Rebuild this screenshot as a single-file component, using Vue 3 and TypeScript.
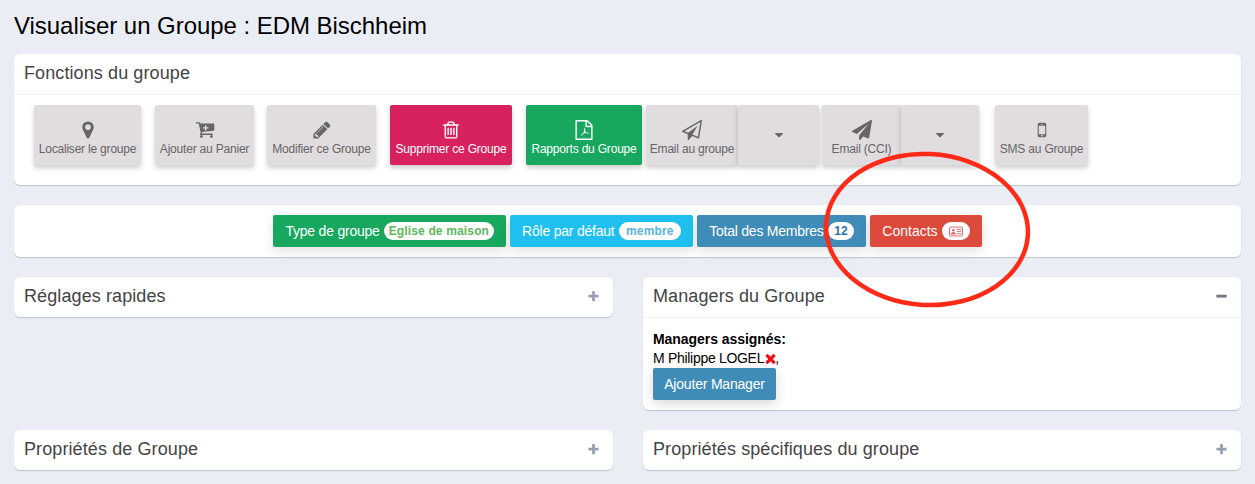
<template>
  <div class="page">
    <h1 class="title">Visualiser un Groupe : EDM Bischheim</h1>

    <section class="card functions">
      <header class="card-head">Fonctions du groupe</header>
      <div class="actions">
        <div
          v-for="group in actionGroups"
          :key="group.label"
          class="action-group"
          :style="{ marginRight: group.gap + 'px' }"
        >
          <button class="action" :class="group.tone" :style="{ width: group.width + 'px' }">
            <svg class="action-icon" viewBox="0 0 1792 1792">
              <path :d="group.icon" fill="currentColor" />
            </svg>
            <span>{{ group.label }}</span>
          </button>
          <button v-if="group.dropWidth" class="action caret-button" :style="{ width: group.dropWidth + 'px' }">
            <svg class="caret" viewBox="0 0 1792 1792"><path :d="icons.caret" fill="currentColor" /></svg>
          </button>
        </div>
      </div>
    </section>

    <section class="card stats">
      <button v-for="s in stats" :key="s.label" class="stat" :class="s.tone">
        {{ s.label }}
        <span class="pill" :class="s.pillClass">
          <template v-if="s.value">{{ s.value }}</template>
          <svg v-else class="contact-icon" viewBox="0 0 20 14">
            <rect x="0.7" y="0.7" width="18.6" height="12.6" rx="1.5" fill="none" stroke="currentColor" stroke-width="1.4" />
            <circle cx="6.2" cy="5.2" r="1.9" fill="currentColor" />
            <path d="M2.8 11.2c0-2.4 1.4-3.4 3.4-3.4s3.4 1 3.4 3.4z" fill="currentColor" />
            <path d="M11.4 4h6M11.4 7h6M11.4 10h6" stroke="currentColor" stroke-width="1.3" />
          </svg>
        </span>
      </button>
    </section>

    <div class="columns">
      <section class="card panel">
        <header class="card-head flat">
          Réglages rapides
          <svg class="toggle" viewBox="0 0 1792 1792"><path :d="icons.plus" fill="currentColor" /></svg>
        </header>
      </section>

      <section class="card panel">
        <header class="card-head">
          Managers du Groupe
          <svg class="toggle dark" viewBox="0 0 1792 1792"><path :d="icons.minus" fill="currentColor" /></svg>
        </header>
        <div class="managers">
          <strong>Managers assignés:</strong>
          <div class="manager-line">M Philippe LOGEL<svg class="remove" viewBox="0 0 1792 1792"><path :d="icons.times" fill="currentColor" /></svg>,</div>
          <button class="add-manager">Ajouter Manager</button>
        </div>
      </section>

      <section class="card panel">
        <header class="card-head flat">
          Propriétés de Groupe
          <svg class="toggle" viewBox="0 0 1792 1792"><path :d="icons.plus" fill="currentColor" /></svg>
        </header>
      </section>

      <section class="card panel">
        <header class="card-head flat">
          Propriétés spécifiques du groupe
          <svg class="toggle" viewBox="0 0 1792 1792"><path :d="icons.plus" fill="currentColor" /></svg>
        </header>
      </section>
    </div>

    <!-- hand-drawn annotation sitting on top of the screenshot -->
    <svg class="scribble" viewBox="0 0 1255 484">
      <ellipse cx="927" cy="229.5" rx="101" ry="75.5" transform="rotate(3 927 229.5)" fill="none" stroke="#ff2a17" stroke-width="4.5" />
    </svg>
  </div>
</template>

<script setup lang="ts">
const icons = {
  marker:
    'M1152 640q0-106-75-181t-181-75-181 75-75 181 75 181 181 75 181-75 75-181zm256 0q0 109-33 179l-364 774q-16 33-47.5 52t-67.5 19-67.5-19-46.5-52l-365-774q-33-70-33-179 0-212 150-362t362-150 362 150 150 362z',
  cart:
    'M1216 704q0-26-19-45t-45-19h-128v-128q0-26-19-45t-45-19-45 19-19 45v128h-128q-26 0-45 19t-19 45 19 45 45 19h128v128q0 26 19 45t45 19 45-19 19-45v-128h128q26 0 45-19t19-45zm-512 768q0 53-37.5 90.5t-90.5 37.5-90.5-37.5-37.5-90.5 37.5-90.5 90.5-37.5 90.5 37.5 37.5 90.5zm896 0q0 53-37.5 90.5t-90.5 37.5-90.5-37.5-37.5-90.5 37.5-90.5 90.5-37.5 90.5 37.5 37.5 90.5zm128-1088v512q0 24-16 42.5t-41 21.5l-1044 122q1 7 4.5 21.5t6 26.5 2.5 22q0 16-24 64h920q26 0 45 19t19 45-19 45-45 19h-1024q-26 0-45-19t-19-45q0-14 11-39.5t29.5-59.5 20.5-38l-177-823h-204q-26 0-45-19t-19-45 19-45 45-19h256q16 0 28.5 6.5t20 15.5 13 24.5 7.5 26.5 5.5 29.5 4.5 25.5h1201q26 0 45 19t19 45z',
  pencil:
    'M491 1536l91-91-235-235-91 91v107h128v128h107zm523-928q0-22-22-22-10 0-17 7l-542 542q-7 7-7 17 0 22 22 22 10 0 17-7l542-542q7-7 7-17zm-54-192l416 416-832 832h-416v-416zm683 96q0 53-37 90l-166 166-416-416 166-165q36-38 90-38 53 0 91 38l235 234q37 39 37 91z',
  trash:
    'M704 736v576q0 14-9 23t-23 9h-64q-14 0-23-9t-9-23v-576q0-14 9-23t23-9h64q14 0 23 9t9 23zm256 0v576q0 14-9 23t-23 9h-64q-14 0-23-9t-9-23v-576q0-14 9-23t23-9h64q14 0 23 9t9 23zm256 0v576q0 14-9 23t-23 9h-64q-14 0-23-9t-9-23v-576q0-14 9-23t23-9h64q14 0 23 9t9 23zm128 724v-948h-896v948q0 22 7 40.5t14.5 27 10.5 8.5h832q3 0 10.5-8.5t14.5-27 7-40.5zm-672-1076h448l-48-117q-7-9-17-11h-317q-10 2-17 11zm928 32v64q0 14-9 23t-23 9h-96v948q0 83-47 143.5t-113 60.5h-832q-66 0-113-58.5t-47-141.5v-952h-96q-14 0-23-9t-9-23v-64q0-14 9-23t23-9h309l70-167q15-37 54-63t79-26h320q40 0 79 26t54 63l70 167h309q14 0 23 9t9 23z',
  // page outline with folded corner and a rough pdf squiggle
  pdf:
    'M1596 380q28 28 48 76t20 88v1152q0 40-28 68t-68 28h-1344q-40 0-68-28t-28-68v-1600q0-40 28-68t68-28h896q40 0 88 20t76 48zm-444-244v376h376q-10-29-22-41l-313-313q-12-12-41-22zm384 1528v-1024h-416q-40 0-68-28t-28-68v-416h-768v1536h1280zm-514-593q25 20 64 44 45-5 89-5 111 0 134 37 12 17 1 40 0 1-1 2l-2 2v1q-4 25-47 25-32 0-77-13t-87-35q-146 16-259 55-101 173-160 173-10 0-19-5l-16-8-4-3q-7-7-4-25 6-28 39-64t92-67q10-6 16 4 1 1 2 3 36-59 74-136 47-94 72-181-17-58-21.5-112.5t4.5-89.5q8-28 30-28h16q17 0 26 11 13 15 6 49-1 4-3 5 1 3 1 8v15q-1 62-7 97 28 84 74 122z',
  plane:
    'M1764 11q33 24 27 64l-256 1536q-5 29-32 45-14 8-31 8-11 0-24-5l-453-185-242 295q-18 23-49 23-13 0-22-4-19-7-30.5-23.5t-11.5-36.5v-349l864-1059-1069 925-395-162q-37-14-40-55-2-40 32-59l1664-960q15-9 32-9 20 0 36 11z',
  planeOutline:
    'M1764 11q33 24 27 64l-256 1536q-5 29-32 45-14 8-31 8-11 0-24-5l-527-215-298 327q-18 21-47 21-14 0-23-4-19-7-30-23.5t-11-36.5v-452l-472-193q-37-14-40-55-3-39 32-59l1664-960q35-21 68 2zm-342 1499l221-1323-1434 827 336 137 863-639-478 797z',
  mobile:
    'M976 1408q0-33-23.5-56.5t-56.5-23.5-56.5 23.5-23.5 56.5 23.5 56.5 56.5 23.5 56.5-23.5 23.5-56.5zm208-160v-704q0-13-9.5-22.5t-22.5-9.5h-512q-13 0-22.5 9.5t-9.5 22.5v704q0 13 9.5 22.5t22.5 9.5h512q13 0 22.5-9.5t9.5-22.5zm-192-848q0-16-16-16h-160q-16 0-16 16t16 16h160q16 0 16-16zm288-16v1024q0 52-38 90t-90 38h-512q-52 0-90-38t-38-90v-1024q0-52 38-90t90-38h512q52 0 90 38t38 90z',
  caret:
    'M1408 704q0 26-19 45l-448 448q-19 19-45 19t-45-19l-448-448q-19-19-19-45t19-45 45-19h896q26 0 45 19t19 45z',
  plus:
    'M1600 736v192q0 40-28 68t-68 28h-416v416q0 40-28 68t-68 28h-192q-40 0-68-28t-28-68v-416h-416q-40 0-68-28t-28-68v-192q0-40 28-68t68-28h416v-416q0-40 28-68t68-28h192q40 0 68 28t28 68v416h416q40 0 68 28t28 68z',
  minus:
    'M1600 736v192q0 40-28 68t-68 28h-1216q-40 0-68-28t-28-68v-192q0-40 28-68t68-28h1216q40 0 68 28t28 68z',
  times:
    'M1490 1322q0 40-28 68l-136 136q-28 28-68 28t-68-28l-294-294-294 294q-28 28-68 28t-68-28l-136-136q-28-28-28-68t28-68l294-294-294-294q-28-28-28-68t28-68l136-136q28-28 68-28t68 28l294 294 294-294q28-28 68-28t68 28l136 136q28 28 28 68t-28 68l-294 294 294 294q28 28 28 68z',
}

interface ActionGroup {
  label: string
  icon: string
  width: number
  gap: number
  tone?: string
  dropWidth?: number
}

const actionGroups: ActionGroup[] = [
  { label: 'Localiser le groupe', icon: icons.marker, width: 107, gap: 14 },
  { label: 'Ajouter au Panier', icon: icons.cart, width: 99, gap: 13 },
  { label: 'Modifier ce Groupe', icon: icons.pencil, width: 109, gap: 14 },
  { label: 'Supprimer ce Groupe', icon: icons.trash, width: 122, gap: 14, tone: 'pink' },
  { label: 'Rapports du Groupe', icon: icons.pdf, width: 116, gap: 4, tone: 'green' },
  { label: 'Email au groupe', icon: icons.planeOutline, width: 92, gap: 3, dropWidth: 81 },
  { label: 'Email (CCI)', icon: icons.plane, width: 79, gap: 16, dropWidth: 78 },
  { label: 'SMS au Groupe', icon: icons.mobile, width: 93, gap: 0 },
]

const stats = [
  { label: 'Type de groupe', value: 'Eglise de maison', tone: 'green', pillClass: 'pill-green' },
  { label: 'Rôle par défaut', value: 'membre', tone: 'sky', pillClass: 'pill-sky' },
  { label: 'Total des Membres', value: '12', tone: 'blue', pillClass: 'pill-blue' },
  { label: 'Contacts', value: '', tone: 'red', pillClass: 'pill-red' },
]
</script>

<style scoped>
.page {
  position: relative;
  height: 484px;
  box-sizing: border-box;
  padding: 12px 14px 0;
  overflow: hidden;
  background: #eaeef4;
  font-family: "Liberation Sans", Arial, sans-serif;
  color: #000;
}

.title {
  margin: 0 0 14px;
  font-size: 24px;
  line-height: 28px;
  font-weight: 400;
  letter-spacing: -0.04px;
}

.card {
  background: #fff;
  border-radius: 6px;
  box-shadow: 0 1px 1px rgba(60, 70, 90, 0.25);
}

.card-head {
  position: relative;
  height: 41px;
  box-sizing: border-box;
  padding: 0 10px;
  border-bottom: 1px solid #f1f1f3;
  font-size: 18px;
  line-height: 38px;
  letter-spacing: 0.1px;
  color: #444;
}

.card-head.flat {
  height: 40px;
  border-bottom: 0;
}

.functions {
  height: 131px;
  margin-bottom: 20px;
}

.actions {
  display: flex;
  padding: 10px 20px 0;
}

.action-group {
  display: flex;
}

.action {
  display: flex;
  flex-direction: column;
  align-items: center;
  height: 60px;
  box-sizing: border-box;
  padding: 15px 0 0;
  border: 0;
  border-radius: 2px;
  background: #e0dcdf;
  box-shadow: 0 3px 5px rgba(0, 0, 0, 0.2);
  color: #666;
  font-family: inherit;
  font-size: 12px;
  line-height: 16px;
  letter-spacing: -0.2px;
  white-space: nowrap;
}

.action.pink {
  background: #d8215f;
  color: #fff;
}

.action.green {
  background: #18a75e;
  color: #fff;
}

.action-icon {
  display: block;
  width: 20px;
  height: 20px;
  margin-bottom: 1px;
}

.caret-button {
  justify-content: center;
  padding: 0;
}

.caret {
  width: 14px;
  height: 14px;
}

.stats {
  display: flex;
  justify-content: center;
  gap: 4px;
  height: 52px;
  box-sizing: border-box;
  padding-top: 10px;
  margin-bottom: 20px;
}

.stat {
  display: flex;
  align-items: center;
  gap: 4px;
  height: 32px;
  padding: 0 12px;
  border: 0;
  border-radius: 2px;
  box-shadow: 0 4px 12px rgba(0, 0, 0, 0.12);
  color: #fff;
  font-family: inherit;
  font-size: 14px;
  letter-spacing: -0.22px;
  white-space: nowrap;
}

.stat.green { background: #18a75e; }
.stat.sky { background: #1fc0ef; }
.stat.blue { background: #3f8cb9; }
.stat.red { background: #dc4a3c; letter-spacing: 0; }

.pill {
  display: inline-flex;
  align-items: center;
  height: 18px;
  padding: 0 5.5px;
  border-radius: 9px;
  background: #fff;
  font-size: 12px;
  font-weight: 700;
  letter-spacing: 0.15px;
}

.pill-green { color: #5cb85c; padding: 0 5px; }
.pill-sky { color: #5bb4da; padding: 0 7.5px; }
.pill-blue { color: #2f6fa8; padding: 0 6.5px; }
.pill-red { color: #e2646a; padding: 0 7px; }

.contact-icon {
  width: 14px;
  height: 11px;
}

.columns {
  display: grid;
  grid-template-columns: 599px 598px;
  column-gap: 30px;
  row-gap: 20px;
  align-items: start;
}

.toggle {
  position: absolute;
  top: 13px;
  right: 13px;
  width: 13px;
  height: 13px;
  color: #97a0b3;
}

.toggle.dark {
  color: #6d7686;
}

.managers {
  height: 92px;
  box-sizing: border-box;
  padding: 11px 10px 0;
  font-size: 14px;
  line-height: 20px;
  letter-spacing: -0.3px;
}

.managers strong {
  display: block;
  letter-spacing: -0.05px;
}

.manager-line {
  height: 19px;
  line-height: 19px;
}

.remove {
  width: 15px;
  height: 15px;
  margin: 0 -2.5px 0 -1.5px;
  vertical-align: -3px;
  color: #f01010;
}

.add-manager {
  display: block;
  height: 32px;
  width: 123px;
  padding: 0;
  border: 0;
  border-radius: 2px;
  background: #3f8cb9;
  box-shadow: 0 4px 12px rgba(0, 0, 0, 0.15);
  color: #fff;
  font-family: inherit;
  font-size: 14px;
  letter-spacing: -0.2px;
}

.scribble {
  position: absolute;
  inset: 0;
  width: 1255px;
  height: 484px;
  pointer-events: none;
}
</style>

<style>
html,
body {
  margin: 0;
  background: #eaeef4;
}
</style>
